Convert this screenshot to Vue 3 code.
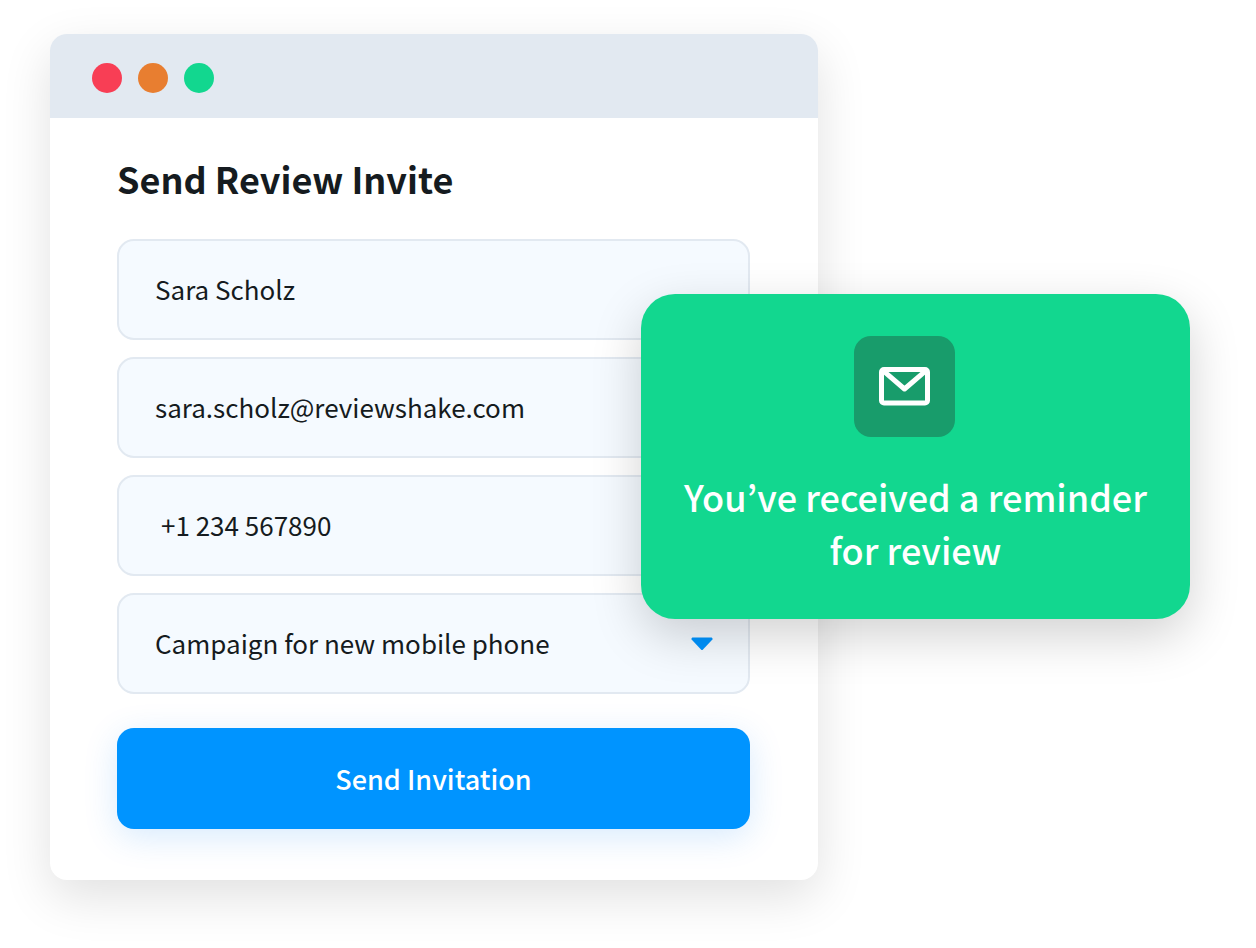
<script setup>
import { ref } from 'vue'

const name = ref('Sara Scholz')
const email = ref('sara.scholz@reviewshake.com')
const phone = ref('+1 234 567890')
const campaign = ref('Campaign for new mobile phone')
const campaigns = ['Campaign for new mobile phone']
</script>

<template>
  <main class="scene">
    <section class="window">
      <header class="titlebar">
        <span class="dot dot-red"></span>
        <span class="dot dot-orange"></span>
        <span class="dot dot-green"></span>
      </header>
      <form class="form" @submit.prevent>
        <h1 class="title">Send Review Invite</h1>
        <div class="fields">
          <input v-model="name" class="field" type="text" aria-label="Name" />
          <input v-model="email" class="field" type="email" aria-label="Email" />
          <input v-model="phone" class="field field-phone" type="tel" aria-label="Phone" />
          <div class="select-wrap">
            <select v-model="campaign" class="field" aria-label="Campaign">
              <option v-for="c in campaigns" :key="c" :value="c">{{ c }}</option>
            </select>
            <svg class="caret" viewBox="0 0 22 14" aria-hidden="true">
              <path d="M1.4 0.5H20.6Q22 0.9 21.4 2.4L12 12.6Q11 13.6 10 12.6L0.6 2.4Q0 0.9 1.4 0.5Z" fill="#0094ff" />
            </svg>
          </div>
        </div>
        <button class="submit" type="submit">Send Invitation</button>
      </form>
    </section>

    <aside class="toast" role="status">
      <span class="badge">
        <svg class="envelope" viewBox="0 0 51 39" fill="none" stroke="#fff" stroke-width="5" stroke-linejoin="round" aria-hidden="true">
          <rect x="2.5" y="2.5" width="46" height="33.5" rx="2.5" />
          <path d="M3.5 3.2L25.5 22L47.5 3.2" />
        </svg>
      </span>
      <p class="message">You’ve received a reminder for review</p>
    </aside>
  </main>
</template>

<style>
body {
  background: #fff;
}
</style>

<style scoped>
.scene {
  display: grid;
  grid-template-columns: 591fr 177fr 372fr;
  align-items: start;
  box-sizing: border-box;
  padding: 34px 66px 68px 50px;
  font-family: "Noto Sans CJK KR", "Noto Sans", sans-serif;
  color: #151b20;
}

.window {
  grid-area: 1 / 1 / 2 / 3;
  border-radius: 17px;
  background: #fff;
  box-shadow: 0 17px 50px rgba(0, 0, 0, 0.12);
}

.titlebar {
  display: flex;
  align-items: center;
  gap: 16px;
  box-sizing: border-box;
  height: 84px;
  padding: 4px 42px 0;
  border-radius: 17px 17px 0 0;
  background: #e2e9f1;
}

.dot {
  width: 30px;
  height: 30px;
  border-radius: 50%;
}

.dot-red {
  background: #f83e55;
}

.dot-orange {
  background: #e87e30;
}

.dot-green {
  background: #12d78f;
}

.form {
  padding: 33px 68px 51px 67px;
}

.title {
  margin: 0 0 34px;
  font-size: 36px;
  line-height: 54px;
  font-weight: 700;
}

.fields {
  display: grid;
  gap: 17px;
}

.field {
  display: block;
  box-sizing: border-box;
  width: 100%;
  height: 101px;
  margin: 0;
  padding: 0 36px 2px;
  border: 2px solid #e2e9f1;
  border-radius: 17px;
  outline: none;
  appearance: none;
  background: #f5faff;
  color: inherit;
  font-family: inherit;
  font-size: 26px;
}

.field-phone {
  padding-left: 42px;
}

.select-wrap {
  position: relative;
}

.caret {
  position: absolute;
  top: 44px;
  right: 37px;
  width: 22px;
  height: 14px;
  pointer-events: none;
}

.submit {
  display: block;
  width: 100%;
  height: 101px;
  margin: 34px 0 0;
  padding: 0;
  border: 0;
  border-radius: 17px;
  background: #0094ff;
  box-shadow: 0 8px 34px rgba(0, 124, 240, 0.16);
  color: #fff;
  font-family: inherit;
  font-size: 27px;
  font-weight: 500;
}

.toast {
  grid-area: 1 / 2 / 2 / 4;
  display: flex;
  flex-direction: column;
  align-items: center;
  z-index: 1;
  margin-top: 260px;
  padding: 42px 34px 43px;
  border-radius: 34px;
  background: #12d78f;
  box-shadow: 0 17px 50px rgba(0, 0, 0, 0.18);
}

.badge {
  display: grid;
  place-items: center;
  width: 101px;
  height: 101px;
  margin: 0 22px 33px 0;
  border-radius: 17px;
  background: #189c6b;
}

.envelope {
  width: 51px;
  height: 39px;
}

.message {
  margin: 0;
  color: #fff;
  font-size: 36px;
  line-height: 53px;
  font-weight: 500;
  text-align: center;
}
</style>
